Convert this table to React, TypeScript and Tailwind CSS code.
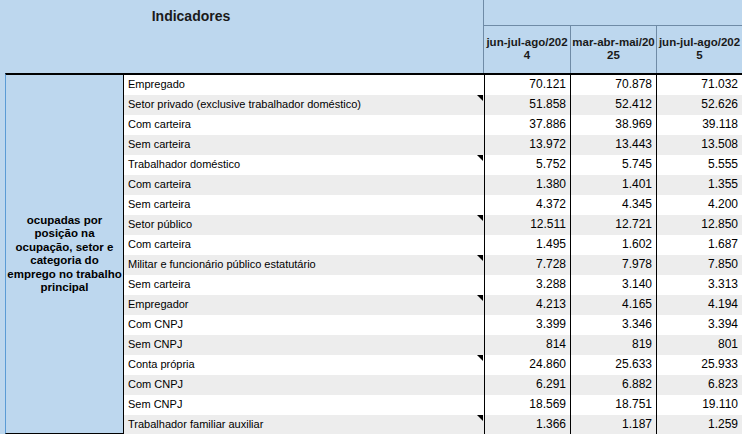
import React from 'react';

interface Row {
  label: string;
  values: string[];
  note?: boolean;
}

const rows: Row[] = [
  { label: 'Empregado', values: ['70.121', '70.878', '71.032'] },
  { label: 'Setor privado (exclusive trabalhador doméstico)', values: ['51.858', '52.412', '52.626'], note: true },
  { label: 'Com carteira', values: ['37.886', '38.969', '39.118'] },
  { label: 'Sem carteira', values: ['13.972', '13.443', '13.508'] },
  { label: 'Trabalhador doméstico', values: ['5.752', '5.745', '5.555'], note: true },
  { label: 'Com carteira', values: ['1.380', '1.401', '1.355'] },
  { label: 'Sem carteira', values: ['4.372', '4.345', '4.200'] },
  { label: 'Setor público', values: ['12.511', '12.721', '12.850'], note: true },
  { label: 'Com carteira', values: ['1.495', '1.602', '1.687'] },
  { label: 'Militar e funcionário público estatutário', values: ['7.728', '7.978', '7.850'], note: true },
  { label: 'Sem carteira', values: ['3.288', '3.140', '3.313'] },
  { label: 'Empregador', values: ['4.213', '4.165', '4.194'], note: true },
  { label: 'Com CNPJ', values: ['3.399', '3.346', '3.394'] },
  { label: 'Sem CNPJ', values: ['814', '819', '801'] },
  { label: 'Conta própria', values: ['24.860', '25.633', '25.933'], note: true },
  { label: 'Com CNPJ', values: ['6.291', '6.882', '6.823'] },
  { label: 'Sem CNPJ', values: ['18.569', '18.751', '19.110'] },
  { label: 'Trabalhador familiar auxiliar', values: ['1.366', '1.187', '1.259'], note: true },
];

const periods = [
  ['jun-jul-ago/202', '4'],
  ['mar-abr-mai/20', '25'],
  ['jun-jul-ago/202', '5'],
];

const groupLines = [
  'ocupadas por',
  'posição na',
  'ocupação, setor e',
  'categoria do',
  'emprego no trabalho',
  'principal',
];

const colWidths = ['w-[86px]', 'w-[86px]', 'flex-1'];

function NoteMark() {
  return (
    <svg className="absolute right-[1px] top-0" width="6" height="6" viewBox="0 0 6 6">
      <polygon points="0,0 6,0 6,6" fill="#000" />
    </svg>
  );
}

export default function App() {
  return (
    <div className="w-[742px] h-[434px] overflow-hidden bg-white text-black font-['Liberation_Sans',Arial,sans-serif]">
      {/* Header */}
      <div className="flex h-[73px] bg-[#bdd7ee]">
        <div className="w-[483px]">
          <div className="w-[382px] pt-[6px] text-center text-[14px] font-bold text-[#1a1a1a]">
            Indicadores
          </div>
        </div>
        <div className="flex-1 flex flex-col border-l border-[#6f8ba6]">
          <div className="h-[26px] border-b border-[#6f8ba6]" />
          <div className="flex-1 flex">
            {periods.map((p, i) => (
              <div
                key={i}
                className={`${colWidths[i]} flex flex-col items-center justify-center pb-[1px] text-[11.5px] leading-[13px] font-bold text-[#1a1a1a] whitespace-nowrap ${i > 0 ? 'border-l border-[#6f8ba6]' : ''}`}
              >
                <span>{p[0]}</span>
                <span>{p[1]}</span>
              </div>
            ))}
          </div>
        </div>
      </div>

      {/* Body */}
      <div className="flex h-[361px]">
        <div className="w-[5px] bg-[#bdd7ee]" />
        <div className="flex-1 flex border-l border-[#5b9bd5] border-t-2 border-t-black border-b border-b-black">
          <div className="w-[117px] bg-[#bdd7ee] flex flex-col items-center justify-center text-center text-[11.5px] leading-[13.5px] font-bold whitespace-nowrap">
            {groupLines.map((l, i) => (
              <span key={i}>{l}</span>
            ))}
          </div>
          <div className="flex-1 grid grid-rows-[repeat(18,1fr)] border-l border-black">
            {rows.map((r, i) => (
              <div
                key={i}
                className={`flex text-[11px] ${i % 2 === 1 ? 'bg-[#ededed]' : 'bg-white'}`}
              >
                <div className="relative w-[360px] flex items-center pl-[4px] pb-[2px]">
                  {r.label}
                  {r.note && <NoteMark />}
                </div>
                {r.values.map((v, j) => (
                  <div
                    key={j}
                    className={`${colWidths[j]} flex items-center justify-end pr-[4px] pb-[2px] text-[12px] border-l border-black`}
                  >
                    {v}
                  </div>
                ))}
              </div>
            ))}
          </div>
        </div>
      </div>
    </div>
  );
}
